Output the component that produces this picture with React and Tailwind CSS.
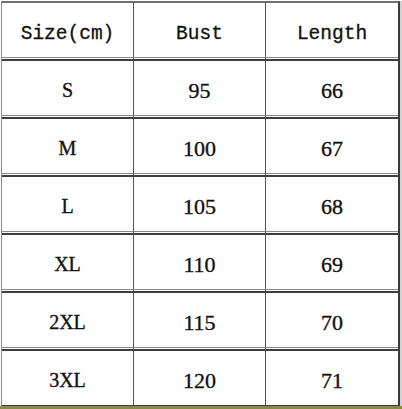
import React from "react";

const rows = [
    ["S", "95", "66"],
    ["M", "100", "67"],
    ["L", "105", "68"],
    ["XL", "110", "69"],
    ["2XL", "115", "70"],
    ["3XL", "120", "71"],
];

const headers = ["Size(cm)", "Bust", "Length"];

// double rule between rows, vertical lines keep running through it
const Separator = () => (
    <div className="grid grid-cols-[132px_132px_1fr] h-[4px]">
        <div className="border-t border-b-2 border-t-[#8a8a8a] border-b-[#3f3f3f] border-r border-r-[#555]" />
        <div className="border-t border-b-2 border-t-[#8a8a8a] border-b-[#3f3f3f] border-r border-r-[#555]" />
        <div className="border-t border-b-2 border-t-[#8a8a8a] border-b-[#3f3f3f]" />
    </div>
);

const Row = ({cells, header}) => (
    <div className="grid grid-cols-[132px_132px_1fr] h-[54px]">
        {cells.map((text, i) => (
            <div
                key={i}
                className={`flex items-center justify-center text-[#111] ${
                    i < 2 ? "border-r border-[#555]" : ""
                } ${
                    header
                        ? "pt-[9px] font-['Liberation_Mono',monospace] text-[19.5px] [-webkit-text-stroke:0.3px_#111]"
                        : i === 0
                            ? "pt-[4px] font-['Liberation_Serif',serif] text-[20px] [-webkit-text-stroke:0.35px_#111]"
                            : "pt-[4px] font-['Liberation_Serif',serif] text-[22px] [-webkit-text-stroke:0.35px_#111]"
                }`}
            >
                {text}
            </div>
        ))}
    </div>
);

export default function App() {
    return (
        <div className="w-[402px] h-[409px] bg-white flex flex-col pt-px">
            <div className="flex flex-1">
                <div className="ml-px w-[399px] flex flex-col border-l border-l-[#8a8a8a] border-t-2 border-t-[#6e6e6e] border-r-2 border-r-[#3c3c3c] border-b border-b-[#3c3c3c]">
                    <Row cells={headers} header />
                    {rows.map((r) => (
                        <React.Fragment key={r[0]}>
                            <Separator />
                            <Row cells={r} />
                        </React.Fragment>
                    ))}
                </div>
                <div className="w-[2px] bg-[#d2d2d2]" />
            </div>
            <div className="h-[3px] bg-[#8d8b3a]" />
        </div>
    );
}
